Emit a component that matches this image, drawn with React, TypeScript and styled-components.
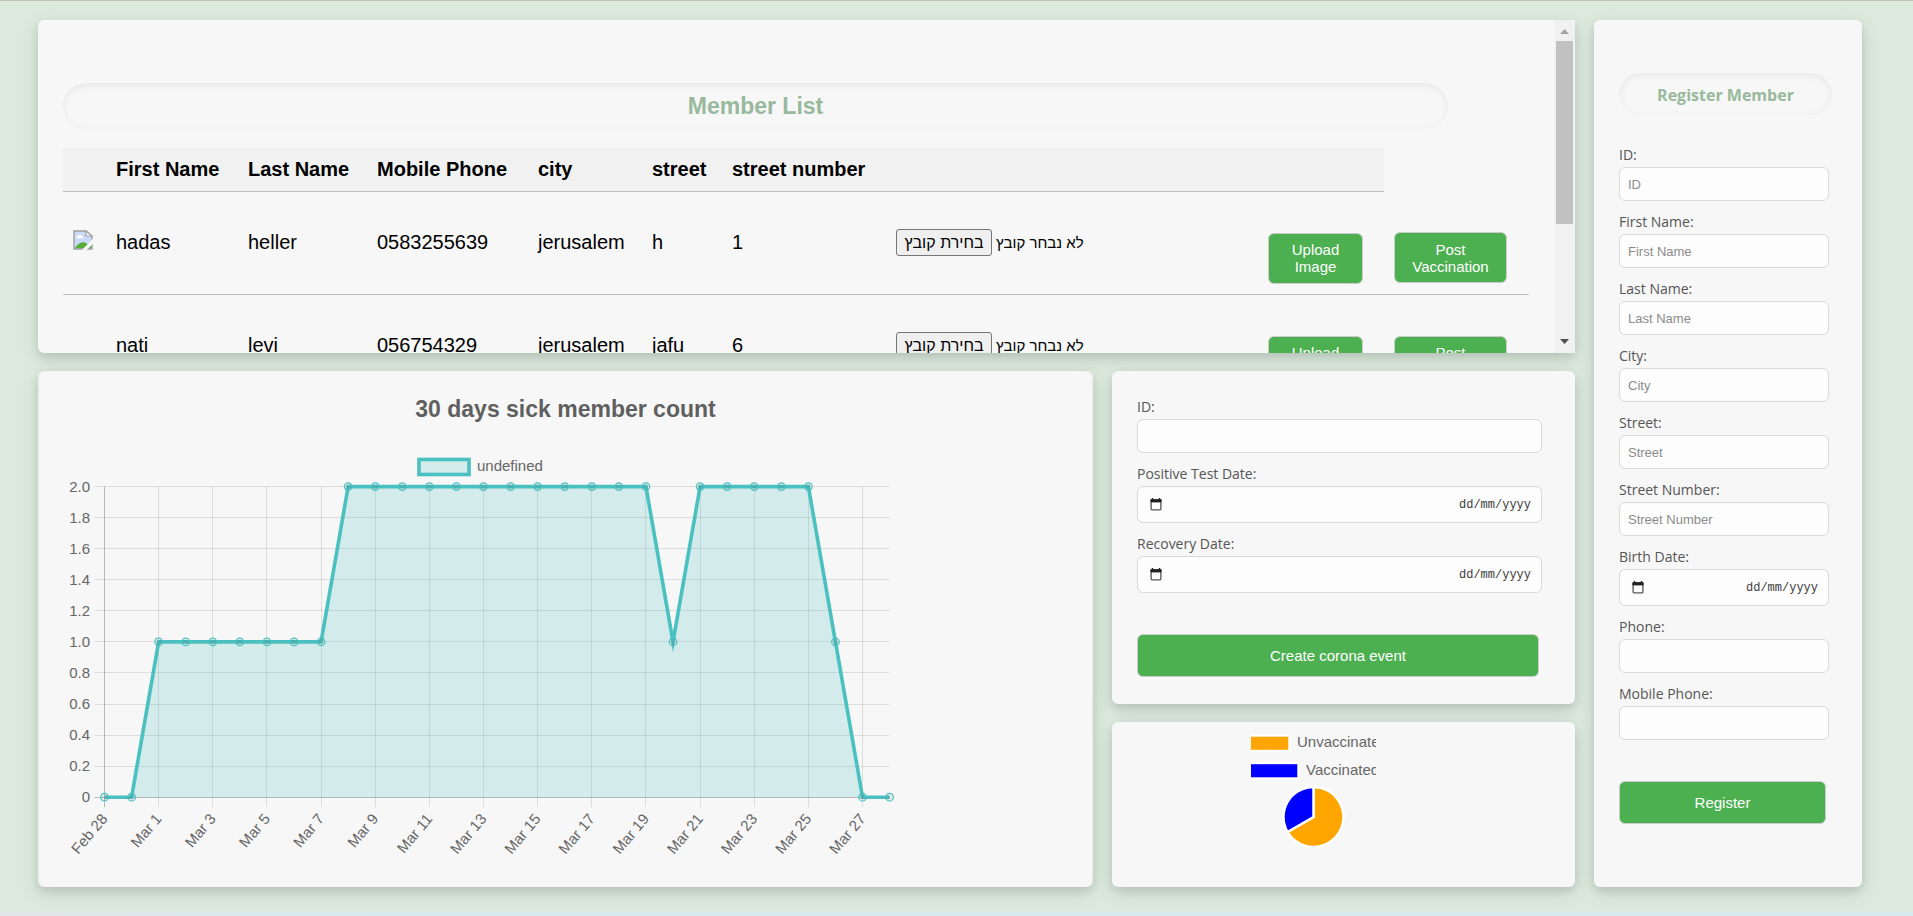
import React, { useId, useRef } from "react";
import styled, { createGlobalStyle } from "styled-components";

const sans = `"Liberation Sans", Arial, sans-serif`;
const humanist = `"Open Sans", "Noto Sans", sans-serif`;
const green = "#4caf50";
const teal = "rgb(75, 192, 192)";

const GlobalStyle = createGlobalStyle`
  *, *::before, *::after { box-sizing: border-box; }
  body {
    margin: 0;
    background: #dbeadd;
    font-family: ${sans};
  }
`;

const Page = styled.div`
  display: flex;
  flex-direction: column;
  height: 100vh;
  min-height: 860px;
  border-top: 1px solid #c0bfb0;
`;

const Dashboard = styled.main`
  flex: 1;
  min-height: 0;
  display: grid;
  grid-template-columns: minmax(0, 1055fr) minmax(0, 463fr) minmax(0, 268fr);
  grid-template-rows: minmax(0, 333fr) minmax(0, 333fr) minmax(0, 165fr);
  grid-template-areas:
    "members members register"
    "sick corona register"
    "sick vaccine register";
  column-gap: 19px;
  row-gap: 18px;
  padding: 19px 51px 25px 38px;
`;

const Footer = styled.div`
  height: 4px;
  background: linear-gradient(90deg, #dfe6e5, #d6e9ef 20%, #d6e9ef);
`;

const Card = styled.section<{ $area: string }>`
  grid-area: ${(p) => p.$area};
  min-width: 0;
  background: #f7f7f7;
  border-radius: 6px;
  box-shadow: 0 4px 8px rgba(0, 0, 0, 0.1), 0 6px 20px rgba(0, 0, 0, 0.1);
`;

const MembersCard = styled(Card)`
  display: flex;
  border-radius: 6px 0 0 6px;
`;

const MembersPane = styled.div`
  flex: 1;
  min-width: 0;
  overflow: auto;
  scrollbar-width: none;
  padding: 63px 25px 155px;
`;

const ScrollBar = styled.div`
  display: flex;
  flex-direction: column;
  align-items: center;
  justify-content: space-between;
  width: 21px;
  background: #f1f1f1;
`;

const ScrollTrack = styled.div`
  flex: 1;
  width: 17px;
`;

const ScrollThumb = styled.div`
  height: 63%;
  background: #c1c1c1;
`;

const ScrollArrow = styled.svg`
  display: block;
  width: 21px;
  height: 21px;
`;

const PillTitle = styled.h2<{ $compact?: boolean }>`
  display: flex;
  align-items: center;
  justify-content: center;
  height: ${(p) => (p.$compact ? "42px" : "46px")};
  margin: 0 ${(p) => (p.$compact ? "5px" : "81px")} 0 0;
  padding-top: ${(p) => (p.$compact ? "2px" : "0")};
  border-radius: 24px;
  box-shadow: inset 0 2px 8px rgba(0, 0, 0, 0.07);
  color: #98b99c;
  font: bold ${(p) => (p.$compact ? `16px/22px ${humanist}` : `23px/28px ${sans}`)};
`;

const MemberTable = styled.table`
  width: 100%;
  margin-top: 19px;
  table-layout: fixed;
  border-collapse: collapse;
  font-size: 20px;
  line-height: 23px;
`;

const Col = styled.col<{ $w?: number }>`
  width: ${(p) => (p.$w ? `${p.$w}px` : "auto")};
`;

const Th = styled.th`
  height: 43px;
  padding: 0 10px;
  background: #f1f1f1;
  border-bottom: 1px solid #bdbdbd;
  text-align: left;
  white-space: nowrap;
`;

const Td = styled.td`
  height: 103px;
  padding: 10px;
  border-bottom: 1px solid #bdbdbd;
  vertical-align: middle;
`;

const Picture = styled.svg`
  display: block;
  margin-bottom: 6px;
`;

const FileField = styled.div`
  display: flex;
  align-items: center;
  gap: 4px;
  font: 15px/17px ${sans};
`;

const FileButton = styled.button`
  width: 96px;
  height: 27px;
  padding: 0;
  border: 1px solid #767676;
  border-radius: 3px;
  background: #efefef;
  color: #000;
  font: 16px/18px ${sans};
`;

const GreenButton = styled.button`
  border: 1px solid #ccc;
  border-radius: 6px;
  background: ${green};
  color: #fff;
  font: 15px/17px ${sans};
`;

const RowButton = styled(GreenButton)<{ $w: number }>`
  display: block;
  width: ${(p) => p.$w}px;
  height: 51px;
  margin-top: 31px;
  padding: 0 16px;
`;

const FormCard = styled(Card)<{ $top: number }>`
  padding: ${(p) => p.$top}px 25px 25px;
`;

const Form = styled.form<{ $top: number; $right: number }>`
  display: flex;
  flex-direction: column;
  gap: 11px;
  margin: ${(p) => p.$top}px ${(p) => p.$right}px 0 0;
`;

const Field = styled.div`
  display: flex;
  flex-direction: column;
  gap: 3px;
`;

const Label = styled.label`
  color: #555;
  font: 14px/19px ${humanist};
`;

const Input = styled.input`
  width: 100%;
  height: 34px;
  padding: 0 8px;
  border: 1px solid #d9d9d9;
  border-radius: 6px;
  background: #fdfdfd;
  font: 13px/16px ${sans};

  &::placeholder {
    color: #8c8c8c;
    opacity: 1;
  }
`;

const DateBox = styled.div`
  display: flex;
  align-items: center;
  height: 37px;
  padding: 0 10px 0 12px;
  border: 1px solid #d9d9d9;
  border-radius: 6px;
  background: #fdfdfd;
`;

const PickerButton = styled.button`
  display: flex;
  padding: 0;
  border: 0;
  background: none;
`;

const DateInput = styled.input`
  flex: 1;
  min-width: 0;
  padding: 0;
  border: 0;
  background: none;
  font: 12px/16px "Liberation Mono", monospace;
  text-align: right;

  &::placeholder {
    color: #3c3c3c;
    opacity: 1;
  }
`;

const SubmitButton = styled(GreenButton)`
  height: 43px;
  margin: 30px 3px 0 0;
`;

const ChartCard = styled(Card)`
  padding: 0 2px;
  background: #f1f1f1;
`;

const ChartPanel = styled.div`
  height: 100%;
  padding: 24px 23px 0;
  border-radius: 8px;
  background: #f7f7f7;
`;

const ChartTitle = styled.h2`
  margin: 0;
  color: #5f5f5f;
  font: bold 23px/28px ${sans};
  text-align: center;
`;

const LineSvg = styled.svg`
  display: block;
  max-width: 100%;
  margin-top: 27px;
  font: 15px ${sans};
`;

const PieSvg = styled.svg`
  display: block;
  margin: 8px 0 0 30%;
  font: 15px ${sans};
`;

const BrokenImage = () => (
  <Picture width="20" height="20" viewBox="0 0 20 20" role="img" aria-label="Member">
    <path d="M1 1h12l6 5v13H1z" fill="#c9dafa" stroke="#a0a0a0" strokeWidth="1.4" />
    <path d="M3 8.2a2.4 2.4 0 0 1 2-2.2 2.2 2.2 0 0 1 4 .2 1.8 1.8 0 0 1 1.4 2z" fill="#fff" />
    <path d="M1.8 18.2c2-3.6 5-6 8-6 2.4 0 4 1.2 5 2.4l-3.6 3.6z" fill="#58ad3a" />
    <path d="M15.5 18.2l2.8-2.8v2.8z" fill="#58ad3a" />
    <path d="M20 8.5L9 20h4.5L20 13.8z" fill="#f7f7f7" />
    <path d="M13 1v5h6z" fill="#fff" stroke="#a0a0a0" strokeWidth="1.2" />
  </Picture>
);

const CalendarIcon = () => (
  <svg width="12" height="13" viewBox="0 0 12 13" aria-hidden="true">
    <path d="M2.5 0v2M9.5 0v2" stroke="#222" strokeWidth="1.4" />
    <rect x="1.1" y="1.8" width="9.8" height="10" rx="0.8" fill="none" stroke="#555" strokeWidth="1.3" />
    <path d="M0.5 1.2h11v3.2h-11z" fill="#222" />
  </svg>
);

function FilePicker() {
  const input = useRef<HTMLInputElement>(null);
  return (
    <FileField>
      <input ref={input} type="file" hidden />
      <FileButton type="button" onClick={() => input.current?.click()}>
        בחירת קובץ
      </FileButton>
      <span>לא נבחר קובץ</span>
    </FileField>
  );
}

type FieldSpec = { label: string; placeholder?: string; date?: boolean };

function FormField({ label, placeholder, date }: FieldSpec) {
  const id = useId();
  return (
    <Field>
      <Label htmlFor={id}>{label}:</Label>
      {date ? (
        <DateBox>
          <PickerButton type="button" aria-label={`Pick ${label}`}>
            <CalendarIcon />
          </PickerButton>
          <DateInput id={id} type="text" placeholder="dd/mm/yyyy" />
        </DateBox>
      ) : (
        <Input id={id} type="text" placeholder={placeholder} />
      )}
    </Field>
  );
}

const headings = ["", "First Name", "Last Name", "Mobile Phone", "city", "street", "street number", "", ""];
const columnWidths = [43, 132, 129, 161, 114, 80, 164, undefined, 126, 145];

const members = [
  { photo: true, cells: ["hadas", "heller", "0583255639", "jerusalem", "h", "1"] },
  { photo: false, cells: ["nati", "levi", "056754329", "jerusalem", "jafu", "6"] },
];

const registerFields: FieldSpec[] = [
  { label: "ID", placeholder: "ID" },
  { label: "First Name", placeholder: "First Name" },
  { label: "Last Name", placeholder: "Last Name" },
  { label: "City", placeholder: "City" },
  { label: "Street", placeholder: "Street" },
  { label: "Street Number", placeholder: "Street Number" },
  { label: "Birth Date", date: true },
  { label: "Phone" },
  { label: "Mobile Phone" },
];

const coronaFields: FieldSpec[] = [
  { label: "ID" },
  { label: "Positive Test Date", date: true },
  { label: "Recovery Date", date: true },
];

const counts = [0, 0, ...Array(7).fill(1), ...Array(12).fill(2), 1, ...Array(5).fill(2), 1, 0, 0];

function SickChart() {
  const left = 41.5;
  const right = 826.6;
  const top = 36.6;
  const bottom = 347.2;
  const x = (i: number) => left + ((right - left) * i) / (counts.length - 1);
  const y = (v: number) => bottom - ((bottom - top) * v) / 2;
  const crisp = (n: number) => Math.floor(n) + 0.5;
  const line = counts.map((v, i) => `${i ? "L" : "M"}${x(i)} ${y(v)}`).join("");
  const dayTicks = counts.map((_, i) => i).filter((i) => i % 2 === 0);
  const valueTicks = Array.from({ length: 11 }, (_, k) => k / 5);

  return (
    <LineSvg width="840" height="415" viewBox="0 0 840 415" fill="#666">
      <rect x="356" y="9.5" width="50" height="15" fill="rgba(75,192,192,0.2)" stroke={teal} strokeWidth="3.6" />
      <text x="414" y="21">undefined</text>
      {valueTicks.map((v) => (
        <g key={v}>
          <line
            x1={left - 10}
            x2={right}
            y1={crisp(y(v))}
            y2={crisp(y(v))}
            stroke={v === 0 ? "rgba(0,0,0,0.25)" : "rgba(0,0,0,0.1)"}
          />
          <text x="27" y={y(v) + 5} textAnchor="end">
            {v === 0 ? "0" : v.toFixed(1)}
          </text>
        </g>
      ))}
      {dayTicks.map((i) => (
        <g key={i}>
          <line
            x1={crisp(x(i))}
            x2={crisp(x(i))}
            y1={top}
            y2={bottom + 10}
            stroke={i === 0 ? "rgba(0,0,0,0.25)" : "rgba(0,0,0,0.1)"}
          />
          <text transform={`translate(${x(i)} 366) rotate(-50)`} dy="5" textAnchor="end">
            {i === 0 ? "Feb 28" : `Mar ${i - 1}`}
          </text>
        </g>
      ))}
      <path d={`${line}L${right} ${bottom}L${left} ${bottom}Z`} fill="rgba(75,192,192,0.2)" />
      <path d={line} fill="none" stroke={teal} strokeWidth="3.6" strokeMiterlimit="10" />
      {counts.map((v, i) => (
        <circle key={i} cx={x(i)} cy={y(v)} r="3.8" fill="rgba(0,0,0,0.06)" stroke={teal} strokeWidth="1.2" />
      ))}
    </LineSvg>
  );
}

function VaccineChart() {
  return (
    <PieSvg width="125" height="120" viewBox="0 0 125 120" fill="#666">
      <rect x="-3" y="5.5" width="41.5" height="15.5" fill="orange" stroke="#fff" strokeWidth="2.4" />
      <text x="46" y="17">Unvaccinated</text>
      <rect x="-3" y="33" width="50.5" height="15.5" fill="blue" stroke="#fff" strokeWidth="2.4" />
      <text x="55" y="45">Vaccinated</text>
      <g stroke="#fff" strokeWidth="2.5">
        <path d="M62.5 87V57A30 30 0 1 1 36.5 102Z" fill="orange" />
        <path d="M62.5 87L36.5 102A30 30 0 0 1 62.5 57Z" fill="blue" />
      </g>
    </PieSvg>
  );
}

export default function App() {
  return (
    <>
      <GlobalStyle />
      <Page>
        <Dashboard>
          <MembersCard $area="members">
            <MembersPane>
              <PillTitle>Member List</PillTitle>
              <MemberTable>
                <colgroup>
                  {columnWidths.map((w, i) => (
                    <Col key={i} $w={w} />
                  ))}
                </colgroup>
                <thead>
                  <tr>
                    {headings.map((h, i) => (
                      <Th key={i}>{h}</Th>
                    ))}
                  </tr>
                </thead>
                <tbody>
                  {members.map((m) => (
                    <tr key={m.cells[0]}>
                      <Td>{m.photo && <BrokenImage />}</Td>
                      {m.cells.map((c, i) => (
                        <Td key={i}>{c}</Td>
                      ))}
                      <Td>
                        <FilePicker />
                      </Td>
                      <Td>
                        <RowButton type="button" $w={95}>
                          Upload Image
                        </RowButton>
                      </Td>
                      <Td>
                        <RowButton type="button" $w={113}>
                          Post Vaccination
                        </RowButton>
                      </Td>
                    </tr>
                  ))}
                </tbody>
              </MemberTable>
            </MembersPane>
            <ScrollBar aria-hidden="true">
              <ScrollArrow viewBox="0 0 21 21">
                <path d="M6 14l4.5-5 4.5 5z" fill="#a3a3a3" />
              </ScrollArrow>
              <ScrollTrack>
                <ScrollThumb />
              </ScrollTrack>
              <ScrollArrow viewBox="0 0 21 21">
                <path d="M6 7l4.5 5 4.5-5z" fill="#505050" />
              </ScrollArrow>
            </ScrollBar>
          </MembersCard>

          <FormCard $area="register" $top={53}>
            <PillTitle $compact>Register Member</PillTitle>
            <Form $top={30} $right={8}>
              {registerFields.map((f) => (
                <FormField key={f.label} {...f} />
              ))}
              <SubmitButton type="submit">Register</SubmitButton>
            </Form>
          </FormCard>

          <ChartCard $area="sick">
            <ChartPanel>
              <ChartTitle>30 days sick member count</ChartTitle>
              <SickChart />
            </ChartPanel>
          </ChartCard>

          <FormCard $area="corona" $top={26}>
            <Form $top={0} $right={8}>
              {coronaFields.map((f) => (
                <FormField key={f.label} {...f} />
              ))}
              <SubmitButton type="submit">Create corona event</SubmitButton>
            </Form>
          </FormCard>

          <Card $area="vaccine">
            <VaccineChart />
          </Card>
        </Dashboard>
        <Footer />
      </Page>
    </>
  );
}
